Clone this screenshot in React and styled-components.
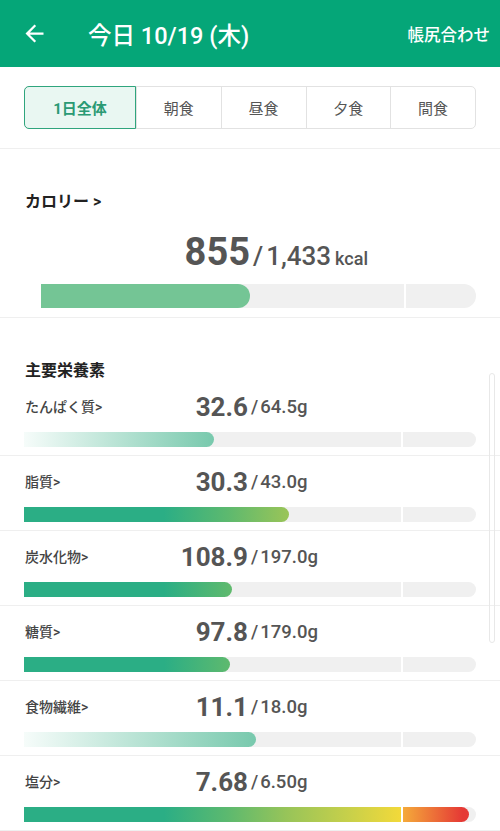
import React from "react";
import styled, { createGlobalStyle } from "styled-components";

const FONT = `Roboto, "Noto Sans CJK JP", "Noto Sans", sans-serif`;
const LIMIT = 1.2; // the track shows up to 120% of the target

const tabs = ["1日全体", "朝食", "昼食", "夕食", "間食"];

const nutrients = [
   { name: "たんぱく質", value: "32.6", target: "64.5", tone: "light" },
   { name: "脂質", value: "30.3", target: "43.0", tone: "scale" },
   { name: "炭水化物", value: "108.9", target: "197.0", tone: "scale" },
   { name: "糖質", value: "97.8", target: "179.0", tone: "scale" },
   { name: "食物繊維", value: "11.1", target: "18.0", tone: "light" },
   { name: "塩分", value: "7.68", target: "6.50", tone: "scale" },
];

const ratio = (v, t) => Math.min(parseFloat(v) / parseFloat(t) / LIMIT, 1);

export default function App() {
   return (
      <Page>
         <GlobalStyle />
         <Header>
            <BackIcon viewBox="0 0 24 24">
               <path d="M20 11H7.83l5.59-5.59L12 4l-8 8 8 8 1.41-1.41L7.83 13H20v-2z" fill="#fff" />
            </BackIcon>
            <HeaderTitle>今日 10/19 (木)</HeaderTitle>
            <HeaderAction>帳尻合わせ</HeaderAction>
         </Header>

         <TabSection>
            <Tabs>
               {tabs.map((t, i) => (
                  <Tab key={t} $active={i === 0}>
                     {t}
                  </Tab>
               ))}
            </Tabs>
         </TabSection>

         <CalorieSection>
            <SectionTitle>カロリー &gt;</SectionTitle>
            <CalorieValue>
               <BigNumber>855</BigNumber>
               <CalorieTotal>
                  <Slash>/</Slash>1,433<Unit>kcal</Unit>
               </CalorieTotal>
            </CalorieValue>
            <CalorieTrack>
               <CalorieFill style={{ width: `${ratio(855, 1433) * 100 - 1.6}%` }} />
               <Marker />
            </CalorieTrack>
         </CalorieSection>

         <NutrientSection>
            <SectionTitle>主要栄養素</SectionTitle>
            {nutrients.map((n) => {
               const p = ratio(n.value, n.target);
               return (
                  <Row key={n.name}>
                     <RowHead>
                        <Label>{n.name}&gt;</Label>
                        <Number>{n.value}</Number>
                        <Total>
                           <Slash>/</Slash>
                           {n.target}g
                        </Total>
                     </RowHead>
                     <Track>
                        <Fill
                           $tone={n.tone}
                           style={{
                              width: `${p * 100}%`,
                              backgroundSize: n.tone === "scale" ? `${100 / p}% 100%` : "100% 100%",
                           }}
                        />
                        <Marker />
                     </Track>
                  </Row>
               );
            })}
            <Scrollbar />
         </NutrientSection>
      </Page>
   );
}

const GlobalStyle = createGlobalStyle`
   * { box-sizing: border-box; }
   body {
      margin: 0;
      background: #fff;
      font-family: ${FONT};
   }
`;

const Page = styled.div`
   width: 100%;
   min-height: 831px;
   background: #fff;
   overflow: hidden;
`;

const Header = styled.header`
   display: flex;
   align-items: center;
   height: 67px;
   padding: 0 10px 0 21px;
   background: #05a678;
   color: #fff;
`;

const BackIcon = styled.svg`
   width: 27px;
   height: 27px;
   flex: none;
`;

const HeaderTitle = styled.div`
   margin-left: 40px;
   font-size: 23.5px;
   font-weight: 500;
`;

const HeaderAction = styled.div`
   margin-left: auto;
   font-size: 16.5px;
   font-weight: 500;
`;

const TabSection = styled.div`
   padding: 19px 24px 19px;
   border-bottom: 1px solid #efefef;
`;

const Tabs = styled.div`
   display: flex;
   height: 43px;
   border: 1px solid #e2e2e2;
   border-radius: 5px;
`;

const Tab = styled.div`
   display: flex;
   align-items: center;
   justify-content: center;
   flex: ${(p) => (p.$active ? "0 0 112px" : "1")};
   font-size: 15px;
   color: ${(p) => (p.$active ? "#2a9a74" : "#555")};
   font-weight: ${(p) => (p.$active ? 700 : 400)};
   background: ${(p) => (p.$active ? "#e9f7f2" : "transparent")};
   border-left: 1px solid #e2e2e2;
   ${(p) =>
      p.$active &&
      `
      margin: -1px 0 -1px -1px;
      border: 1.5px solid #2fa57d;
      border-radius: 5px 0 0 5px;
   `}
`;

const CalorieSection = styled.section`
   padding: 43px 24px 9px;
   border-bottom: 1px solid #efefef;
`;

const SectionTitle = styled.div`
   font-size: 16px;
   line-height: 20px;
   font-weight: 700;
   color: #222;
   padding-left: 1px;
`;

const CalorieValue = styled.div`
   display: grid;
   grid-template-columns: 226px auto;
   align-items: baseline;
   margin-top: 20px;
   height: 40px;
   color: #555;
`;

const BigNumber = styled.span`
   text-align: right;
   font-size: 38px;
   line-height: 40px;
   font-weight: 700;
`;

const CalorieTotal = styled.span`
   font-size: 26px;
   font-weight: 500;
`;

const Slash = styled.span`
   margin: 0 3px 0 3px;
`;

const Unit = styled.span`
   margin-left: 4px;
   font-size: 18px;
`;

const CalorieTrack = styled.div`
   position: relative;
   margin: 12px 0 0 17px;
   height: 24px;
   background: #f0f0f0;
   border-radius: 0 12px 12px 0;
   overflow: hidden;
`;

const CalorieFill = styled.div`
   height: 100%;
   background: #74c595;
   border-radius: 0 12px 12px 0;
`;

const Marker = styled.div`
   position: absolute;
   top: 0;
   bottom: 0;
   left: ${100 / LIMIT}%;
   width: 2px;
   background: #fff;
`;

const NutrientSection = styled.section`
   position: relative;
   padding-top: 43px;

   & > ${SectionTitle} {
      padding-left: 25px;
   }
`;

const Row = styled.div`
   padding: 11px 24px 8px;
   border-bottom: 1px solid #efefef;
`;

const RowHead = styled.div`
   display: grid;
   grid-template-columns: 150px 74px 1fr;
   align-items: center;
   height: 30px;
   color: #555;
`;

const Label = styled.span`
   font-size: 14px;
   line-height: 20px;
   font-weight: 500;
   color: #444;
   padding-left: 1px;
`;

const Number = styled.span`
   text-align: right;
   font-size: 26px;
   line-height: 30px;
   font-weight: 700;
`;

const Total = styled.span`
   font-size: 18.5px;
   font-weight: 500;
   & ${Slash} {
      margin: 0 2px 0 3px;
   }
`;

const Track = styled.div`
   position: relative;
   margin-top: 10px;
   height: 15px;
   background: #f0f0f0;
   border-radius: 0 8px 8px 0;
   overflow: hidden;
`;

const Fill = styled.div`
   height: 100%;
   border-radius: 0 8px 8px 0;
   background-repeat: no-repeat;
   background-image: ${(p) =>
      p.$tone === "light"
         ? "linear-gradient(to right, #f6fcfa, #78c9ad)"
         : `linear-gradient(to right, #2bae85 0%, #2bae85 31%, #5cb96f 45%, #97c459 58%, #c8d04a 72%, #f2d93a 83.3%, #f5ae3a 83.4%, #ec6d38 91%, #e53935 97%)`};
`;

const Scrollbar = styled.div`
   position: absolute;
   top: 55px;
   right: 5px;
   width: 6px;
   height: 270px;
   border: 1px solid #e8e8e8;
   border-radius: 3px;
`;
